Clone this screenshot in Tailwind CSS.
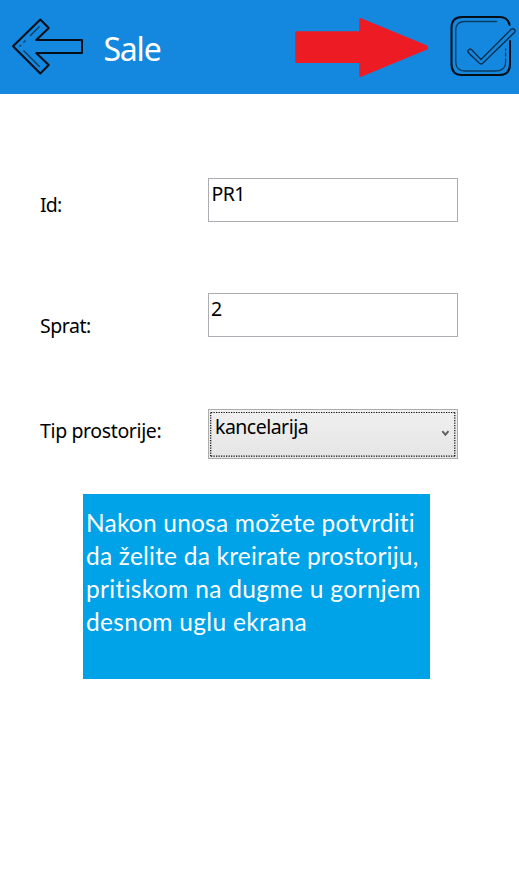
<!DOCTYPE html>
<html lang="sr-Latn">
<head>
<meta charset="utf-8">
<title>Sale</title>
<script src="https://cdn.jsdelivr.net/npm/@tailwindcss/browser@4"></script>
</head>
<body class="bg-white">
<div class="w-[519px] h-[888px] overflow-hidden bg-white text-black font-['Noto_Sans',sans-serif] text-[19.5px] leading-[28px]">
  <header class="h-[94px] bg-[#1488de] flex items-start">
    <svg class="w-[92px] h-[94px] shrink-0" viewBox="0 0 92 94" fill="none" stroke="#050d16" aria-label="Nazad">
      <path d="M13 46.3L40.3 19.5L48.7 28L36.3 40H82V53H36.3L48.7 65L40.3 73.5Z" stroke-width="2" stroke-linejoin="round"/>
      <path d="M39.5 26.5L30 36M25.5 40.5L23.5 42.5M21 45L19.5 46.5M23.5 50.5L39.7 66.7" stroke="#0a3c66" stroke-width="1.3"/>
    </svg>
    <h1 class="w-[203px] pl-[11.5px] pt-[26px] text-[32px] leading-[46px] tracking-[-1.2px] text-white">Sale</h1>
    <svg class="w-[134px] h-[94px] shrink-0" viewBox="0 0 134 94" fill="#ed1c24" stroke="#ed1c24" stroke-width="2" stroke-linejoin="round">
      <path d="M1.2 32.2H65.2V19L131.8 46.5V48.5L65.2 76V62H1.2Z"/>
    </svg>
    <svg class="w-[90px] h-[94px] shrink-0" viewBox="429 0 90 94" fill="none" stroke="#050d16" stroke-linecap="round" aria-label="Potvrdi">
      <path d="M509.6 25C508.3 19.5 505 17 500 17H462C455 17 451.5 21 451.5 28V64C451.5 71 455 75 462 75H499C506 75 510 71 510 64V41" stroke-width="2"/>
      <path d="M496.5 21.5H465C458.5 21.5 455.8 24.5 455.8 30V62C455.8 68 459 71 465 71H496C502.5 71 505.6 68 505.6 62V59M505.6 56V53M505.6 50.5V49" stroke="#0a3c66" stroke-width="1.3"/>
      <path d="M471.4 49.5L481 59.5L511.2 29.2Q513.1 28 514.7 29.7Q515.8 31 514.4 32.5L482.5 63.5Q481 64.5 479.5 63.3L468.4 52.7Q467.4 51 468.7 49.7Q470 48.4 471.4 49.5Z" stroke="#082f50" stroke-width="1.4"/>
    </svg>
  </header>
  <main class="pt-[84px]">
    <div class="flex h-[115px] pl-[40px]">
      <label class="w-[168px] pt-[13px] tracking-[-0.8px]">Id:</label>
      <div class="w-[250px] h-[44px] border border-[#abadb3] pl-[2.5px] pt-px tracking-[-0.55px]">PR1</div>
    </div>
    <div class="flex h-[116px] pl-[40px]">
      <label class="w-[168px] pt-[19px] tracking-[-0.45px]">Sprat:</label>
      <div class="w-[250px] h-[44px] border border-[#abadb3] pl-[2px] pt-px">2</div>
    </div>
    <div class="flex h-[85px] pl-[40px]">
      <label class="w-[168px] pt-[8px] tracking-[-0.37px]">Tip prostorije:</label>
      <div class="w-[250px] h-[50px] border border-[#acacac] bg-linear-to-b from-[#f0f0f0] to-[#e5e5e5] relative pl-[6px] pt-[3px] tracking-[-0.52px]">kancelarija
        <svg class="absolute left-0 top-0 w-[248px] h-[48px]" viewBox="0 0 248 48" fill="none">
          <path d="M2 2.5H246M2 46.2H246M1.7 2.5V47M245.8 2.5V47" stroke="#0a0a0a" stroke-width="1.2" stroke-dasharray="1.25 1.25"/>
          <path d="M233.3 21.2L236.4 24.7L239.5 21.2" stroke="#606060" stroke-width="1.9"/>
        </svg>
      </div>
    </div>
    <div class="ml-[83px] w-[347px] h-[185px] bg-[#00a2e8] pt-[12px] pl-[3px] text-white font-['Lato',sans-serif] text-[24.5px] leading-[33px] whitespace-nowrap">
      <p class="tracking-[0.2px]">Nakon unosa možete potvrditi</p>
      <p class="tracking-[0.22px]">da želite da kreirate prostoriju,</p>
      <p class="tracking-[0.33px]">pritiskom na dugme u gornjem</p>
      <p class="tracking-[0.3px]">desnom uglu ekrana</p>
    </div>
  </main>
</div>
</body>
</html>
